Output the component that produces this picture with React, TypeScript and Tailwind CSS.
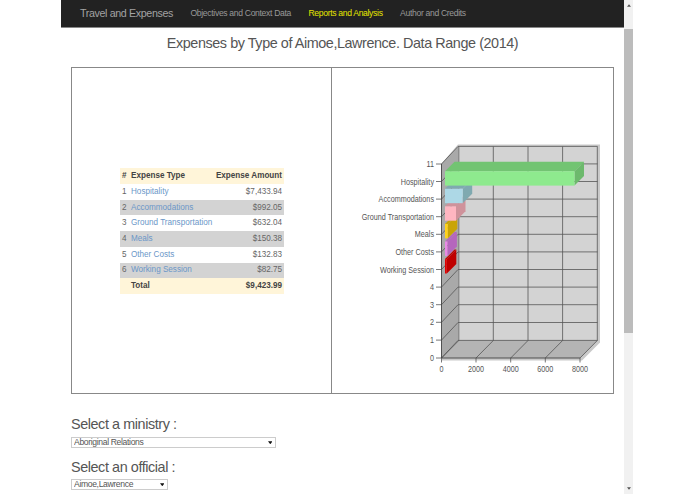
import React from "react";

const rows = [
  ["1", "Hospitality", "$7,433.94"],
  ["2", "Accommodations", "$992.05"],
  ["3", "Ground Transportation", "$632.04"],
  ["4", "Meals", "$150.38"],
  ["5", "Other Costs", "$132.83"],
  ["6", "Working Session", "$82.75"],
];

const yTicks: [number, string][] = [
  [163.5, "11"],
  [181, "Hospitality"],
  [198.6, "Accommodations"],
  [216.2, "Ground Transportation"],
  [233.8, "Meals"],
  [251.4, "Other Costs"],
  [269, "Working Session"],
  [286.6, "4"],
  [304.2, "3"],
  [321.8, "2"],
  [339.6, "1"],
  [357.5, "0"],
];

const xTicks: [number, string][] = [
  [441.5, "0"],
  [476, "2000"],
  [510.7, "4000"],
  [545.3, "6000"],
  [580, "8000"],
];

const bars = [
  { x: 574.5, y: 170.7, front: "#8eea8e", top: "#72c472", side: "#6cb96c" },
  { x: 462.7, y: 188.3, front: "#add8e6", top: "#7fa9b0", side: "#7fa9b0" },
  { x: 456, y: 205.8, front: "#ffb6c1", top: "#cf929b", side: "#cf929b" },
  { x: 447.8, y: 223.4, front: "#ffd21a", top: "#c9a406", side: "#c9a406" },
  { x: 447.4, y: 241, front: "#e98ae5", top: "#b566bd", side: "#b566bd" },
  { x: 446.8, y: 258.6, front: "#e00000", top: "#bf0000", side: "#bf0000" },
];

function Chart() {
  const d = 9.5;
  const h = 14.4;
  const x0 = 445;
  return (
    <svg viewBox="332 68 281 324" className="block w-full h-full">
      <g fontFamily="'Liberation Sans', Arial, sans-serif" fontSize="8.6" fill="#555">
        {/* outer shading */}
        <polygon points="441.5,163 458,144 600,144 600,342 582,360 441.5,360" fill="#c9c9c9" />
        {/* back wall */}
        <rect x="458" y="146" width="139.5" height="194" fill="#d3d3d3" />
        {/* left wall */}
        <polygon points="441.5,163.5 458,146 458,340 441.5,357.5" fill="#a9a9a9" />
        {/* floor */}
        <polygon points="441.5,357.5 458,340 597.5,340 580,357.5" fill="#b4b4b4" />
        {/* horizontal grid */}
        {yTicks.map(([y], i) => (
          <g key={i} stroke="#555" strokeWidth="0.8" fill="none">
            <polyline points={`441.5,${y} 458,${y - 17.6} 597.5,${y - 17.6}`} />
            <line x1="436" x2="441.5" y1={y} y2={y} />
          </g>
        ))}
        {/* vertical grid */}
        {xTicks.map(([x], i) => (
          <g key={i} stroke="#555" strokeWidth="0.8" fill="none">
            <polyline points={`${x},357.5 ${x + 17.3},340 ${x + 17.3},146`} />
            <line x1={x} x2={x} y1="357.5" y2="362" />
          </g>
        ))}
        <line x1="441.5" x2="441.5" y1="163.5" y2="357.5" stroke="#444" strokeWidth="0.9" />
        <line x1="441.5" x2="580" y1="357.5" y2="357.5" stroke="#444" strokeWidth="0.9" />
        {/* bars, drawn bottom first */}
        {[...bars].reverse().map((b, i) => (
          <g key={i}>
            <polygon points={`${x0},${b.y} ${x0 + d},${b.y - d} ${b.x + d},${b.y - d} ${b.x},${b.y}`} fill={b.top} />
            <polygon points={`${b.x},${b.y} ${b.x + d},${b.y - d} ${b.x + d},${b.y - d + h} ${b.x},${b.y + h}`} fill={b.side} />
            <rect x={x0} y={b.y} width={b.x - x0} height={h} fill={b.front} />
          </g>
        ))}
        {/* labels */}
        {yTicks.map(([y, t], i) => (
          <text key={i} transform={`translate(434 ${y + 3}) scale(0.84 1)`} textAnchor="end">{t}</text>
        ))}
        {xTicks.map(([x, t], i) => (
          <text key={i} transform={`translate(${x} 371.5) scale(0.84 1)`} textAnchor="middle">{t}</text>
        ))}
      </g>
    </svg>
  );
}

function Arrow() {
  return (
    <svg viewBox="0 0 6 4" className="absolute right-[4px] top-[3.5px] w-[4.5px] h-[3.5px]">
      <polygon points="0,0 6,0 3,4" fill="#111" />
    </svg>
  );
}

export default function App() {
  return (
    <div className="flex h-[494px] w-[695px] overflow-hidden bg-white font-['Liberation_Sans',Arial,sans-serif] text-[#555]">
      <div className="ml-[61px] w-[563px] shrink-0">
        <nav className="flex h-[28px] items-center gap-[17.5px] border-b border-[#888] bg-[#222] pl-[19px] text-[8.6px] tracking-[-0.33px] text-[#999]">
          <span className="text-[10.7px] tracking-[-0.37px] text-[#a3a3a3]">Travel and Expenses</span>
          <span>Objectives and Context Data</span>
          <span className="text-[#e6e600]">Reports and Analysis</span>
          <span>Author and Credits</span>
        </nav>
        <h1 className="mt-[6px] text-center text-[14.4px] leading-[18px] font-normal tracking-[-0.43px] text-[#555]">
          Expenses by Type of Aimoe,Lawrence. Data Range (2014)
        </h1>
        <div className="mx-[10px] mt-[15px] grid h-[327px] w-[543px] grid-cols-[260px_1fr] border border-[#888]">
          <div className="flex items-center border-r border-[#888] pl-[48px] pt-[1px]">
            <table className="w-[164px] border-collapse text-[8.15px] text-[#666]">
              <thead>
                <tr className="h-[16px] bg-[#fff5d9] font-bold text-[#444]">
                  <th className="w-[10px] pl-[2px] text-left font-bold">#</th>
                  <th className="pl-[1px] text-left font-bold">Expense Type</th>
                  <th className="pr-[2px] text-right font-bold">Expense Amount</th>
                </tr>
              </thead>
              <tbody>
                {rows.map(([n, name, amt], i) => (
                  <tr key={n} className={i % 2 === 1 ? "h-[15.7px] bg-[#d3d3d3]" : "h-[15.7px] bg-white"}>
                    <td className="w-[10px] pl-[2px]">{n}</td>
                    <td className="pl-[1px] text-[#6b97c8]">{name}</td>
                    <td className="pr-[2px] text-right">{amt}</td>
                  </tr>
                ))}
                <tr className="h-[15.7px] bg-[#fff5d9] font-bold text-[#444]">
                  <td></td>
                  <td className="pl-[1px]">Total</td>
                  <td className="pr-[2px] text-right">$9,423.99</td>
                </tr>
              </tbody>
            </table>
          </div>
          <Chart />
        </div>
        <div className="mx-[10px] mt-[21px] text-[14.4px] leading-[18px] tracking-[-0.42px] text-[#555]">Select a ministry :</div>
        <div className="relative mx-[10px] mt-[4px] h-[11px] w-[205px]">
          <select className="block h-full w-full appearance-none border border-[#ccc] bg-white pl-[2px] text-[8.6px] leading-[9px] tracking-[-0.35px] text-[#555]">
            <option>Aboriginal Relations</option>
          </select>
          <Arrow />
        </div>
        <div className="mx-[10px] mt-[10px] text-[14.4px] leading-[18px] tracking-[-0.42px] text-[#555]">Select an official :</div>
        <div className="relative mx-[10px] mt-[3px] h-[11px] w-[97px]">
          <select className="block h-full w-full appearance-none border border-[#ccc] bg-white pl-[2px] text-[8.6px] leading-[9px] tracking-[-0.35px] text-[#555]">
            <option>Aimoe,Lawrence</option>
          </select>
          <Arrow />
        </div>
      </div>
      <div className="flex h-full w-[9px] shrink-0 flex-col bg-[#f1f1f1]">
        <div className="flex h-[29px] justify-center pt-[4px]">
          <svg viewBox="0 0 6 4" className="h-[3px] w-[4px]"><polygon points="3,0 6,4 0,4" fill="#555" /></svg>
        </div>
        <div className="h-[304px] bg-[#bcbcbc]"></div>
        <div className="flex flex-1 items-end justify-center pb-[4px]">
          <svg viewBox="0 0 6 4" className="h-[3px] w-[4px]"><polygon points="0,0 6,0 3,4" fill="#555" /></svg>
        </div>
      </div>
    </div>
  );
}
